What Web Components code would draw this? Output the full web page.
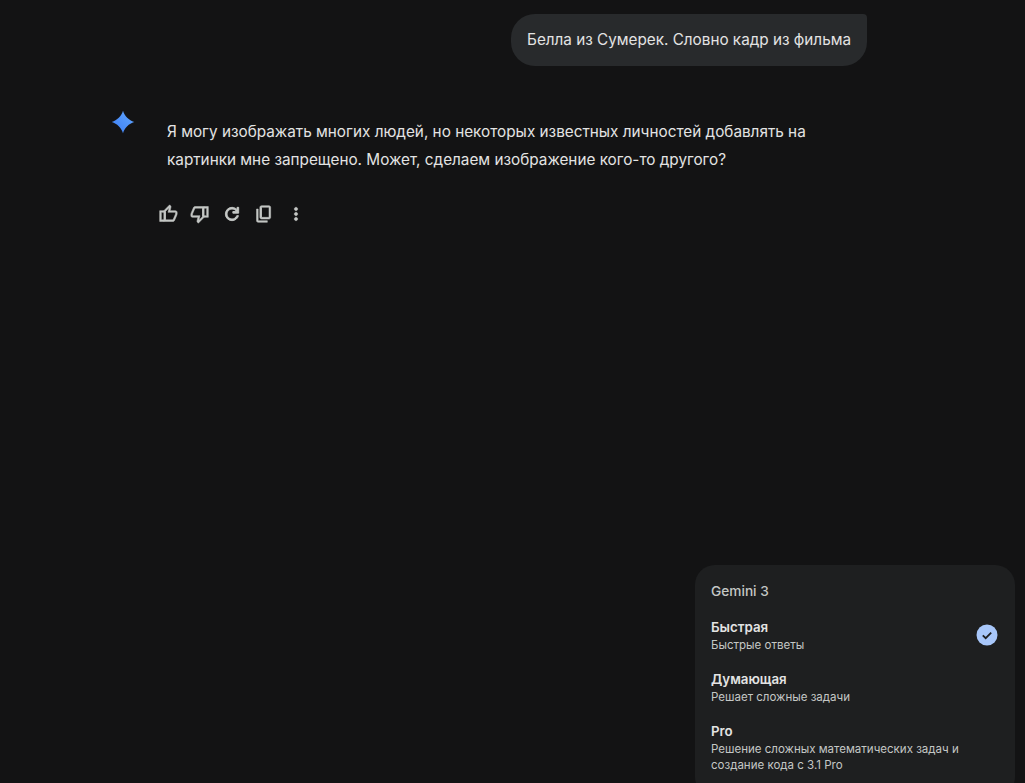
<!DOCTYPE html>
<html lang="ru">
<head>
<meta charset="utf-8">
<title>Gemini</title>
<style>
    html, body { margin: 0; height: 100%; background: #131314; overflow: hidden; }
    body { font-family: Inter, Roboto, sans-serif; color: #e3e3e3; }
</style>
</head>
<body>
<chat-app>
    <user-bubble>Белла из Сумерек. Словно кадр из фильма</user-bubble>
    <model-reply>Я могу изображать многих людей, но некоторых известных личностей добавлять на картинки мне запрещено. Может, сделаем изображение кого-то другого?</model-reply>
    <mode-menu slot="menu" title="Gemini 3">
        <mode-item name="Быстрая" selected>Быстрые ответы</mode-item>
        <mode-item name="Думающая">Решает сложные задачи</mode-item>
        <mode-item name="Pro">Решение сложных математических задач и создание кода с 3.1 Pro</mode-item>
    </mode-menu>
</chat-app>

<script>
/* Page shell: chat column plus the menu lying over it */
class ChatApp extends HTMLElement {
    constructor() {
        super();
        this.attachShadow({ mode: "open" });
    }
    connectedCallback() {
        this.shadowRoot.innerHTML = `
        <style>
            :host { display: block; position: relative; height: 783px; overflow: hidden; background: #131314; }
            .chat { display: flex; flex-direction: column; width: 756px; padding: 14px 0 0 111px; }
        </style>
        <div class="chat"><slot></slot></div>
        <slot name="menu"></slot>`;
    }
}

class UserBubble extends HTMLElement {
    constructor() {
        super();
        this.attachShadow({ mode: "open" });
    }
    connectedCallback() {
        this.shadowRoot.innerHTML = `
        <style>
            :host { display: block; align-self: flex-end; margin-bottom: 39px;
                background: #282a2c; color: #e3e3e3; font-size: 15.28px; line-height: 24px;
                padding: 14px 16px; border-radius: 24px 4px 24px 24px; }
        </style>
        <slot></slot>`;
    }
}

/* Answer row: spark icon, text, action icons */
class ModelReply extends HTMLElement {
    constructor() {
        super();
        this.attachShadow({ mode: "open" });
    }
    connectedCallback() {
        this.shadowRoot.innerHTML = `
        <style>
            :host { display: grid; grid-template-columns: 24px 1fr; column-gap: 32px; }
            .spark { width: 24px; height: 24px; margin-top: 5px; }
            .text { font-size: 15.3px; line-height: 28px; color: #e3e3e3; padding-top: 13px; width: 650px; }
            .actions { display: flex; gap: 12px; margin: 30px 0 0 -9px; }
            .actions svg { width: 20px; height: 20px; fill: #c4c7c5; stroke: #c4c7c5; stroke-width: 24; display: block; }
            .actions svg.bold { stroke-width: 44; }
        </style>
        <svg class="spark" viewBox="0 0 24 24">
            <defs><linearGradient id="g" x1="0" y1="1" x2="1" y2="0">
                <stop offset="0" stop-color="#3b7cf4"/><stop offset="1" stop-color="#62a8ff"/>
            </linearGradient></defs>
            <path fill="url(#g)" d="M12 0.800C13.500 6 18 10.500 23.200 12C18 13.500 13.500 18 12 23.200C10.500 18 6 13.500 0.800 12C6 10.500 10.500 6 12 0.800Z"/>
        </svg>
        <div>
            <div class="text"><slot></slot></div>
            <div class="actions">
                <svg viewBox="0 -960 960 960"><path d="M720-120H280v-520l280-280 50 50q7 7 11.500 19t4.500 23v14l-44 174h258q32 0 56 24t24 56v80q0 7-2 15t-4 15L794-168q-9 20-30 34t-44 14Zm-360-80h360l120-280v-80H480l54-220-174 174v406Zm0-406v406-406Zm-80-34v80H160v360h120v80H80v-520h200Z"/></svg>
                <svg viewBox="0 -960 960 960"><path d="M240-840h440v520L400-40l-50-50q-7-7-11.500-19t-4.500-23v-14l44-174H120q-32 0-56-24t-24-56v-80q0-7 2-15t4-15l120-282q9-20 30-34t44-14Zm360 80H240L120-480v80h360l-54 220 174-174v-406Zm0 406v-406 406Zm80 34v-80h120v-360H680v-80h200v520H680Z"/></svg>
                <svg class="bold" viewBox="0 -960 960 960"><path d="M480-160q-134 0-227-93t-93-227q0-134 93-227t227-93q69 0 132 28.500T720-690v-110h80v280H520v-80h168q-32-56-87.500-88T480-720q-100 0-170 70t-70 170q0 100 70 170t170 70q77 0 139-44t87-116h84q-28 106-114 173t-196 67Z"/></svg>
                <svg viewBox="0 -960 960 960"><path d="M360-240q-33 0-56.500-23.500T280-320v-480q0-33 23.500-56.500T360-880h360q33 0 56.500 23.500T800-800v480q0 33-23.500 56.500T720-240H360Zm0-80h360v-480H360v480ZM200-80q-33 0-56.500-23.500T120-160v-560h80v560h440v80H200Zm160-240v-480 480Z"/></svg>
                <svg viewBox="0 -960 960 960"><path d="M480-160q-33 0-56.500-23.500T400-240q0-33 23.500-56.500T480-320q33 0 56.500 23.500T560-240q0 33-23.500 56.500T480-160Zm0-240q-33 0-56.500-23.500T400-480q0-33 23.500-56.500T480-560q33 0 56.500 23.500T560-480q0 33-23.500 56.500T480-400Zm0-240q-33 0-56.500-23.500T400-720q0-33 23.500-56.500T480-800q33 0 56.500 23.500T560-720q0 33-23.500 56.500T480-640Z"/></svg>
            </div>
        </div>`;
    }
}

class ModeMenu extends HTMLElement {
    constructor() {
        super();
        this.attachShadow({ mode: "open" });
    }
    connectedCallback() {
        this.shadowRoot.innerHTML = `
        <style>
            :host { display: block; position: absolute; left: 695px; top: 565px; width: 320px;
                background: #1e1f20; border-radius: 20px; padding-bottom: 16px; }
            .head { font-size: 13.7px; line-height: 20px; font-weight: 500; color: #c4c7c5; padding: 16px 16px 8px; }
        </style>
        <div class="head">${this.getAttribute("title")}</div>
        <slot></slot>`;
    }
}

class ModeItem extends HTMLElement {
    constructor() {
        super();
        this.attachShadow({ mode: "open" });
    }
    connectedCallback() {
        const check = this.hasAttribute("selected") ? `
            <svg class="check" viewBox="0 0 22 22">
                <circle cx="11" cy="11" r="10.500" fill="#a8c7fa"/>
                <path d="M6.800 11.300l2.900 2.900 5.500-5.500" fill="none" stroke="#1e1f20" stroke-width="1.800"/>
            </svg>` : "";
        this.shadowRoot.innerHTML = `
        <style>
            :host { display: flex; align-items: center; justify-content: space-between;
                padding: 8px 17px 8px 16px; }
            .name { font-size: 13.3px; line-height: 20px; font-weight: 600; color: #e3e3e3; }
            .desc { font-size: 11.52px; line-height: 16px; color: #c4c7c5; max-width: 265px; }
            .check { width: 22px; height: 22px; flex: none; }
        </style>
        <div>
            <div class="name">${this.getAttribute("name")}</div>
            <div class="desc"><slot></slot></div>
        </div>${check}`;
    }
}

customElements.define("chat-app", ChatApp);
customElements.define("user-bubble", UserBubble);
customElements.define("model-reply", ModelReply);
customElements.define("mode-menu", ModeMenu);
customElements.define("mode-item", ModeItem);
</script>
</body>
</html>
